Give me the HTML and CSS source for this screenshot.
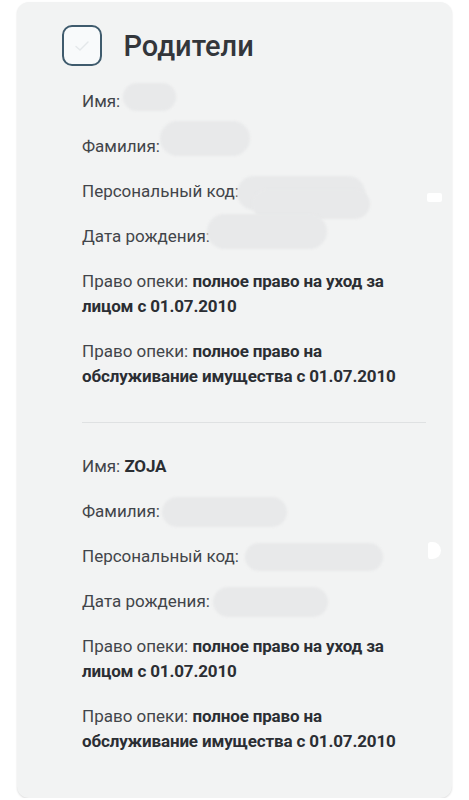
FILE: index.html
```html
<!DOCTYPE html>
<html lang="ru">
<head>
<meta charset="utf-8">
<title>Родители</title>
<link rel="stylesheet" href="styles.css">
</head>
<body>
<div class="card">
  <div class="header">
    <div class="checkbox">
      <svg width="18" height="14" viewBox="0 0 18 14"><path d="M3 7.5 L7 11 L15 3" fill="none" stroke="#e4e8ea" stroke-width="1.4" stroke-linecap="round" stroke-linejoin="round"/></svg>
    </div>
    <h1 class="title">Родители</h1>
  </div>

  <div class="section">
    <div class="row">Имя:<span class="blob b1"></span></div>
    <div class="row">Фамилия:<span class="blob b2"></span></div>
    <div class="row">Персональный код:<span class="blob b3"></span><span class="blob b3x"></span><span class="spot s1"></span></div>
    <div class="row">Дата рождения:<span class="blob b4"></span></div>
    <div class="row">Право опеки: <b>полное право на уход за лицом с 01.07.2010</b></div>
    <div class="row">Право опеки: <b>полное право на обслуживание имущества с 01.07.2010</b></div>
  </div>

  <div class="divider"></div>

  <div class="section">
    <div class="row">Имя: <b>ZOJA</b></div>
    <div class="row">Фамилия:<span class="blob b5"></span></div>
    <div class="row">Персональный код:<span class="blob b6"></span><span class="spot s2"></span></div>
    <div class="row">Дата рождения:<span class="blob b7"></span></div>
    <div class="row">Право опеки: <b>полное право на уход за лицом с 01.07.2010</b></div>
    <div class="row">Право опеки: <b>полное право на обслуживание имущества с 01.07.2010</b></div>
  </div>
</div>
</body>
</html>
```

FILE: styles.css
```css
html, body {
  margin: 0;
  padding: 0;
  background: #ffffff;
}
body {
  font-family: Roboto, "Noto Sans", "Liberation Sans", sans-serif;
  padding-top: 2px;
}
.card {
  margin-left: 17px;
  width: 435px;
  height: 796px;
  box-sizing: border-box;
  background: #f2f3f3;
  border-radius: 12px;
  box-shadow: 0 1px 2px rgba(0,0,0,0.14);
  padding: 23px 26px 0 44.5px;
}
.header {
  display: flex;
  align-items: center;
  gap: 22px;
  height: 41px;
}
.checkbox {
  width: 40px;
  height: 41px;
  box-sizing: border-box;
  border: 2.5px solid #3f5b6d;
  border-radius: 10px;
  background: #f8fafb;
  display: flex;
  align-items: center;
  justify-content: center;
}
.title {
  margin: 0;
  font-size: 29px;
  font-weight: 500;
  color: #33363b;
}
.section {
  margin-left: 20.5px;
  display: flex;
  flex-direction: column;
  gap: 20px;
}
.header + .section {
  margin-top: 22.5px;
}
.row {
  position: relative;
  font-size: 17px;
  line-height: 25px;
  color: #42454a;
}
.row b {
  font-weight: 700;
  color: #2b2e33;
  letter-spacing: -0.15px;
}
.divider {
  margin: 33px 0 31px 20.5px;
  height: 1px;
  background: #dfe1e2;
}
.blob {
  position: absolute;
  background: #e8e9ea;
  border-radius: 18px;
  filter: blur(1px);
}
.b1 { left: 41px; top: -6px; width: 53px; height: 28px; }
.b2 { left: 78px; top: -13px; width: 90px; height: 35px; }
.b3 { left: 155px; top: -3px; width: 128px; height: 34px; }
.b3x { left: 170px; top: 10px; width: 118px; height: 30px; }
.b4 { left: 125px; top: -10px; width: 120px; height: 35px; }
.b5 { left: 80px; top: -2px; width: 125px; height: 30px; }
.b6 { left: 163px; top: -1px; width: 138px; height: 28px; }
.b7 { left: 131px; top: -2px; width: 115px; height: 30px; }
.spot {
  position: absolute;
  background: #ffffff;
}
.s1 { left: 345px; top: 14px; width: 15px; height: 9px; border-radius: 2px; }
.s2 { left: 346px; top: -2px; width: 13px; height: 17px; border-radius: 3px 9px 9px 3px; }
```
